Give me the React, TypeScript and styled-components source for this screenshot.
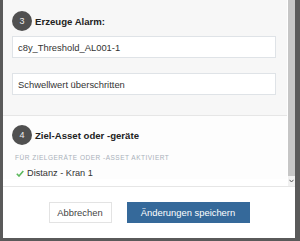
import React from "react";
import styled, { createGlobalStyle } from "styled-components";

const Global = createGlobalStyle`
  html, body { margin: 0; padding: 0; background: #5a5a5a; }
  body { font-family: "Liberation Sans", Arial, sans-serif; color: #333; }
  * { box-sizing: border-box; }
`;

const Backdrop = styled.div`
  width: 300px;
  height: 241px;
  padding: 0 5px 3px 3px;
  background: #5a5a5a;
  overflow: hidden;
`;

const Modal = styled.div`
  width: 292px;
  height: 238px;
  background: #fff;
  display: flex;
  flex-direction: column;
`;

const Body = styled.div`
  height: 187px;
  display: flex;
  border-bottom: 1px solid #e6e6e6;
`;

const Content = styled.div`
  width: 284px;
  display: flex;
  flex-direction: column;
  overflow: hidden;
`;

const Section = styled.div<{ $bg: string; $pt: number; $pb: number }>`
  background: ${(p) => p.$bg};
  padding: ${(p) => p.$pt}px 11px ${(p) => p.$pb}px 9px;
  display: flex;
  flex-direction: column;
`;

const Divider = styled.div`
  height: 1px;
  background: #e6e6e6;
`;

const StepHeader = styled.div`
  display: flex;
  align-items: center;
  gap: 3px;
  height: 20px;
`;

const StepCircle = styled.div`
  width: 20px;
  height: 20px;
  border-radius: 50%;
  background: #505050;
  color: #eee;
  font-size: 9px;
  display: flex;
  align-items: center;
  justify-content: center;
`;

const StepTitle = styled.div`
  font-weight: bold;
  font-size: 9.6px;
  color: #222;
`;

const Input = styled.div<{ $mt: number }>`
  margin-top: ${(p) => p.$mt}px;
  height: 22px;
  background: #fff;
  border: 1px solid #dfe3e7;
  padding: 0 5px;
  display: flex;
  align-items: center;
  font-size: 9.4px;
  color: #333;
`;

const Label = styled.div`
  margin-top: 9px;
  font-size: 6.5px;
  letter-spacing: 0.5px;
  line-height: 8px;
  color: #a9b1ba;
  text-transform: uppercase;
  padding-left: 3px;
  white-space: nowrap;
`;

const Item = styled.div`
  margin-top: 5px;
  display: flex;
  align-items: center;
  gap: 3px;
  height: 12px;
  font-size: 9.2px;
  color: #333;
  padding-left: 4px;
`;

const Scrollbar = styled.div`
  width: 8px;
  display: flex;
  flex-direction: column;
  border-left: 1px solid #fff;
  background: #f1f1f1;
`;

const Thumb = styled.div`
  height: 176px;
  background: #c6c6c6;
`;

const ArrowBox = styled.div`
  flex: 1;
  display: flex;
  align-items: center;
  justify-content: center;
`;

const Footer = styled.div`
  flex: 1;
  display: flex;
  align-items: center;
  justify-content: center;
  gap: 15px;
`;

const Button = styled.button<{ $primary?: boolean; $w: number }>`
  width: ${(p) => p.$w}px;
  height: 21px;
  padding: 0;
  font-family: "Liberation Sans", Arial, sans-serif;
  font-size: 9.4px;
  border: 1px solid ${(p) => (p.$primary ? "#35699a" : "#e3e3e3")};
  background: ${(p) => (p.$primary ? "#35699a" : "#fff")};
  color: ${(p) => (p.$primary ? "#fff" : "#444")};
`;

export default function App() {
  return (
    <>
      <Global />
      <Backdrop>
        <Modal>
          <Body>
            <Content>
              <Section $bg="#f7f7f7" $pt={11} $pb={20}>
                <StepHeader>
                  <StepCircle>3</StepCircle>
                  <StepTitle>Erzeuge Alarm:</StepTitle>
                </StepHeader>
                <Input $mt={5}>c8y_Threshold_AL001-1</Input>
                <Input $mt={15}>Schwellwert überschritten</Input>
              </Section>
              <Divider />
              <Section $bg="#fdfdfd" $pt={9} $pb={0}>
                <StepHeader>
                  <StepCircle>4</StepCircle>
                  <StepTitle>Ziel-Asset oder -geräte</StepTitle>
                </StepHeader>
                <Label>Für Zielgeräte oder -Asset aktiviert</Label>
                <Item>
                  <svg width="8" height="7" viewBox="0 0 8 7">
                    <path d="M0.8 3.8 L3 6 L7.3 1" stroke="#5cb85c" strokeWidth="1.6" fill="none" />
                  </svg>
                  Distanz - Kran 1
                </Item>
              </Section>
            </Content>
            <Scrollbar>
              <Thumb />
              <ArrowBox>
                <svg width="5" height="4" viewBox="0 0 5 4">
                  <path d="M0.5 0.8 L2.5 3 L4.5 0.8" stroke="#555" strokeWidth="1" fill="none" />
                </svg>
              </ArrowBox>
            </Scrollbar>
          </Body>
          <Footer>
            <Button $w={63}>Abbrechen</Button>
            <Button $primary $w={123}>Änderungen speichern</Button>
          </Footer>
        </Modal>
      </Backdrop>
    </>
  );
}
